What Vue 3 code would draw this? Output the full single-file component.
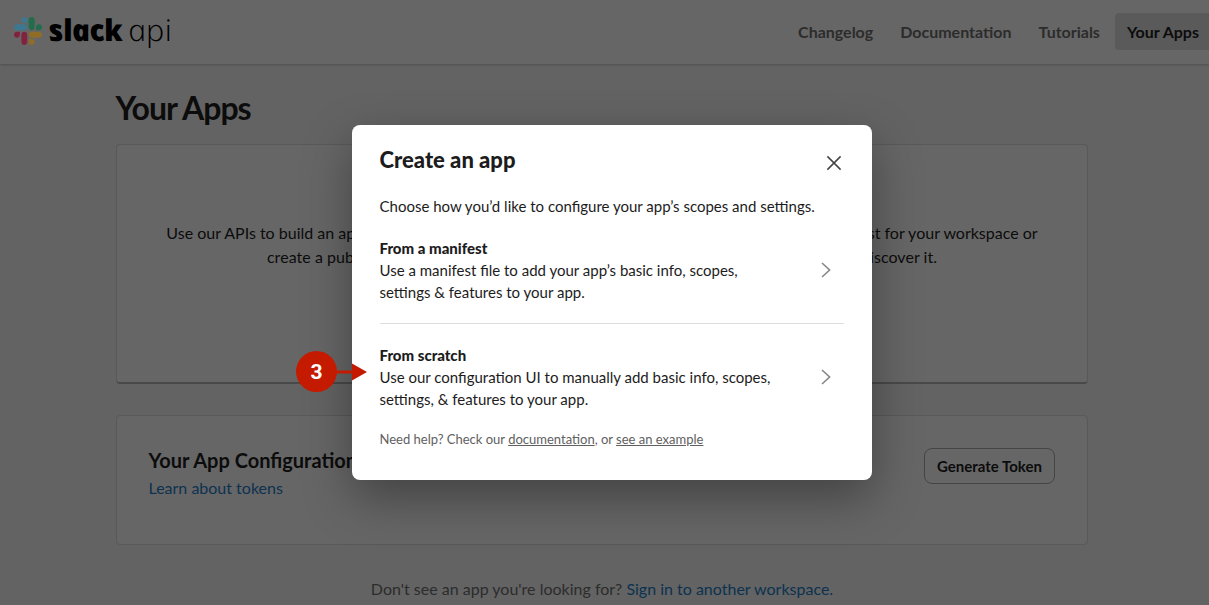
<template>
  <div class="page">
    <header class="site-header">
      <a class="brand" href="#">
        <svg class="brand-mark" viewBox="0 0 122.8 122.8" aria-hidden="true">
          <path fill="#82223f" d="M25.8 77.6c0 7.1-5.8 12.9-12.9 12.9S0 84.7 0 77.6s5.8-12.9 12.9-12.9h12.9v12.9zm6.5 0c0-7.1 5.8-12.9 12.9-12.9s12.9 5.8 12.9 12.9v32.3c0 7.1-5.8 12.9-12.9 12.9s-12.9-5.8-12.9-12.9V77.6z" />
          <path fill="#3c7890" d="M45.2 25.8c-7.1 0-12.9-5.8-12.9-12.9S38.1 0 45.2 0s12.9 5.8 12.9 12.9v12.9H45.2zm0 6.5c7.1 0 12.9 5.8 12.9 12.9s-5.8 12.9-12.9 12.9H12.9C5.8 58.1 0 52.3 0 45.2s5.8-12.9 12.9-12.9h32.3z" />
          <path fill="#216d4c" d="M97 45.2c0-7.1 5.8-12.9 12.9-12.9s12.9 5.8 12.9 12.9-5.8 12.9-12.9 12.9H97V45.2zm-6.5 0c0 7.1-5.8 12.9-12.9 12.9s-12.9-5.8-12.9-12.9V12.9C64.7 5.8 70.5 0 77.6 0s12.9 5.8 12.9 12.9v32.3z" />
          <path fill="#8f6d26" d="M77.6 97c7.1 0 12.9 5.8 12.9 12.9s-5.8 12.9-12.9 12.9-12.9-5.8-12.9-12.9V97h12.9zm0-6.5c-7.1 0-12.9-5.8-12.9-12.9s5.8-12.9 12.9-12.9h32.3c7.1 0 12.9 5.8 12.9 12.9s-5.8 12.9-12.9 12.9H77.6z" />
        </svg>
        <span class="brand-name">slack</span>
        <span class="brand-sub">api</span>
      </a>
      <nav class="nav">
        <a
          v-for="item in navItems"
          :key="item"
          href="#"
          class="nav-link"
          :class="{ active: item === 'Your Apps' }"
        >{{ item }}</a>
      </nav>
    </header>

    <main class="content">
      <h1 class="page-title">Your Apps</h1>

      <section class="card intro-card">
        <p>Use our APIs to build an app that makes people's working lives better. You can create an app that's just for your workspace or</p>
        <p>create a public Slack App to list in the App Directory, where any person on Slack can discover it.</p>
      </section>

      <section class="card token-card">
        <div>
          <h2 class="token-title">Your App Configuration Tokens</h2>
          <a class="token-link" href="#">Learn about tokens</a>
        </div>
        <button class="token-button" type="button">Generate Token</button>
      </section>

      <p class="signin">
        Don't see an app you're looking for? <a href="#">Sign in to another workspace.</a>
      </p>
    </main>

    <div class="overlay">
      <div class="modal" role="dialog" aria-labelledby="modal-title">
        <div class="modal-header">
          <h2 id="modal-title" class="modal-title">Create an app</h2>
          <button class="close" type="button" aria-label="Close">
            <svg width="16" height="16" viewBox="0 0 16 16">
              <path d="M1.4 1.4l13.2 13.2M14.6 1.4L1.4 14.6" />
            </svg>
          </button>
        </div>
        <p class="modal-lead">Choose how you’d like to configure your app’s scopes and settings.</p>

        <div v-for="option in options" :key="option.title" class="option">
          <div class="option-body">
            <h3 class="option-title">{{ option.title }}</h3>
            <p v-for="line in option.lines" :key="line" class="option-text">{{ line }}</p>
          </div>
          <svg class="chevron" width="12" height="16" viewBox="0 0 12 16">
            <path d="M2 1l7.6 7L2 15" />
          </svg>
        </div>

        <p class="help">
          Need help? Check our <a href="#">documentation</a>, or <a href="#">see an example</a>
        </p>

        <!-- step marker pointing at the second option -->
        <div class="marker">
          <span class="marker-number">3</span>
          <svg class="marker-arrow" width="31" height="18" viewBox="0 0 31 18">
            <path d="M0 7.6h16V0.4L31 9 16 17.6V10.4H0z" />
          </svg>
        </div>
      </div>
    </div>
  </div>
</template>

<script setup>
const navItems = ['Changelog', 'Documentation', 'Tutorials', 'Your Apps']

const options = [
  {
    title: 'From a manifest',
    lines: [
      'Use a manifest file to add your app’s basic info, scopes,',
      'settings & features to your app.'
    ]
  },
  {
    title: 'From scratch',
    lines: [
      'Use our configuration UI to manually add basic info, scopes,',
      'settings, & features to your app.'
    ]
  }
]
</script>

<style>
body {
  margin: 0;
  overflow: hidden;
}
</style>

<style scoped>
.page {
  position: relative;
  box-sizing: border-box;
  width: 1209px;
  height: 605px;
  overflow: hidden;
  background: #636363;
  color: #0c0c0c;
  font-family: Lato, sans-serif;
  font-size: 16px;
}

h1,
h2,
h3,
p {
  margin: 0;
}

a {
  text-decoration: none;
}

.site-header {
  display: flex;
  align-items: flex-start;
  justify-content: space-between;
  box-sizing: border-box;
  height: 64px;
  padding-left: 14px;
  background: #666666;
  box-shadow: 0 1px 2px rgba(0, 0, 0, 0.2);
}

.brand {
  display: flex;
  align-items: flex-start;
  padding-top: 17px;
  color: #000000;
  font-family: 'Open Sans', sans-serif;
  font-size: 30px;
  font-style: italic;
  line-height: 26px;
}

.brand-mark {
  width: 28px;
  height: 28px;
}

/* the italic cut has the single-storey "a"; the skew sets it upright */
.brand-name,
.brand-sub {
  display: inline-block;
  transform: skewX(12deg);
}

.brand-name {
  margin-left: 6px;
  font-weight: 800;
  letter-spacing: -0.7px;
}

.brand-sub {
  margin-left: 8px;
  font-weight: 300;
  transform: scaleX(1.08) skewX(12deg);
}

.nav {
  display: flex;
  padding-top: 13px;
}

.nav-link {
  box-sizing: border-box;
  height: 37px;
  margin-left: 3px;
  padding: 0 12px;
  color: #2c2c2c;
  font-weight: 700;
  line-height: 37px;
}

.nav-link.active {
  padding-right: 10px;
  border-radius: 4px 0 0 4px;
  background: #5a5a5a;
  color: #0c0c0c;
}

.content {
  width: 972px;
  margin-left: 116px;
  padding-top: 24px;
}

.page-title {
  margin-left: -0.5px;
  margin-bottom: 16px;
  font-size: 32px;
  font-weight: 700;
  line-height: 40px;
  letter-spacing: -1px;
}

.card {
  box-sizing: border-box;
  border: 1px solid #595959;
  border-radius: 4px;
  background: #666666;
}

.intro-card {
  height: 240px;
  padding-top: 76px;
  border-bottom: 2px solid #494949;
  line-height: 24px;
  text-align: center;
  white-space: nowrap;
}

.intro-card p:last-child {
  letter-spacing: 0.04px;
}

.token-card {
  display: flex;
  align-items: flex-start;
  justify-content: space-between;
  height: 130px;
  margin-top: 31px;
  padding: 32px 32px 0 31.5px;
}

.token-title {
  margin-top: -1px;
  font-size: 20px;
  font-weight: 700;
  line-height: 26px;
}

.token-link {
  display: block;
  margin-top: 1px;
  color: #0c3250;
  line-height: 28px;
}

.token-button {
  box-sizing: border-box;
  width: 131px;
  height: 36px;
  padding: 0;
  border: 1px solid #454545;
  border-radius: 8px;
  background: transparent;
  color: #0c0c0c;
  font-family: inherit;
  font-size: 15px;
  font-weight: 700;
}

.signin {
  margin-top: 32px;
  color: #2c2c2c;
  line-height: 24px;
  text-align: center;
}

.signin a {
  color: #0c3250;
}

.overlay {
  position: absolute;
  top: 125px;
  left: 352px;
}

.modal {
  position: relative;
  box-sizing: border-box;
  width: 520px;
  height: 355px;
  padding: 20px 28px 0 27.5px;
  border-radius: 8px;
  background: #ffffff;
  box-shadow: 0 18px 48px rgba(0, 0, 0, 0.35);
  color: #1d1c1d;
  font-size: 15px;
  line-height: 22px;
}

.modal-header {
  display: flex;
  justify-content: space-between;
}

.modal-title {
  font-size: 22px;
  font-weight: 900;
  line-height: 30px;
}

.close {
  display: flex;
  align-items: center;
  justify-content: center;
  width: 20px;
  height: 36px;
  padding: 0;
  border: 0;
  background: none;
}

.close path {
  fill: none;
  stroke: #454245;
  stroke-width: 1.5;
}

.modal-lead {
  margin-top: 14px;
}

.option {
  display: flex;
  align-items: center;
  justify-content: space-between;
  padding: 20px 12px 20px 0;
}

.option + .option {
  border-top: 1px solid #dddddd;
}

.option-title {
  font-size: 15px;
  font-weight: 900;
}

.chevron path {
  fill: none;
  stroke: #868686;
  stroke-width: 1.6;
}

.help {
  color: #616061;
  font-size: 13px;
  line-height: 18px;
}

.help a {
  color: inherit;
  text-decoration: underline;
}

.marker {
  position: absolute;
  top: 226px;
  left: -56px;
  display: flex;
  align-items: center;
}

.marker-number {
  width: 41px;
  height: 41px;
  border-radius: 50%;
  background: #c41a00;
  color: #ffffff;
  font-family: Roboto, sans-serif;
  font-size: 21px;
  font-weight: 700;
  line-height: 42px;
  text-align: center;
}

.marker-arrow {
  margin-left: -1px;
  fill: #c41a00;
}
</style>
